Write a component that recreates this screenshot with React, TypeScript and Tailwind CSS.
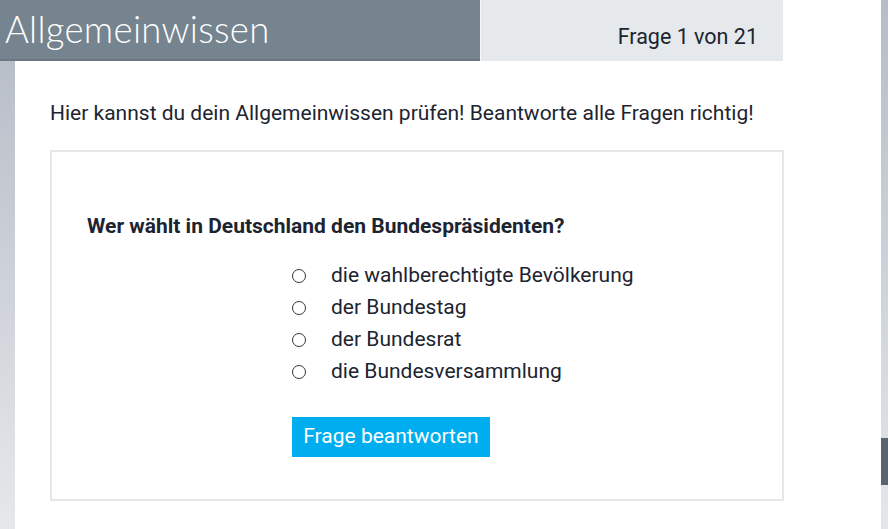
const answers = [
  "die wahlberechtigte Bevölkerung",
  "der Bundestag",
  "der Bundesrat",
  "die Bundesversammlung",
];

export default function App() {
  return (
    <div className="flex h-[529px] w-[888px] overflow-hidden bg-white font-['Roboto',sans-serif] text-[#1c2430]">
      <div className="flex w-[881px] flex-col">
        {/* Kopfzeile */}
        <div className="flex h-[61px] shrink-0">
          <div className="flex w-[480px] items-center border-b-2 border-[#6b7883] bg-[#76848f] pl-[5px]">
            <h1 className="font-['Lato',sans-serif] text-[36.5px] font-light leading-none tracking-[0.3px] text-white">
              Allgemeinwissen
            </h1>
          </div>
          <div className="w-px bg-[#f4f6f7]" />
          <div className="flex w-[302px] items-center justify-end bg-[#e6e9ec] pr-[25px] pt-[12px]">
            <span className="text-[21.5px] leading-none">Frage 1 von 21</span>
          </div>
        </div>

        <div className="flex flex-1">
          <div className="w-[15px] bg-gradient-to-b from-[#b9bfc9] to-[#e6e8eb]" />
          <main className="flex-1 pl-[35px] pt-[40px]">
            <p className="text-[21px] leading-[24px]">
              Hier kannst du dein Allgemeinwissen prüfen! Beantworte alle Fragen richtig!
            </p>
            <div className="mt-[25px] h-[351px] w-[734px] border-2 border-[#e5e8ea] pl-[35px] pt-[62px]">
              <h2 className="text-[21px] font-bold leading-[24px]">
                Wer wählt in Deutschland den Bundespräsidenten?
              </h2>
              <div className="ml-[205px] mt-[22px] flex flex-col">
                {answers.map((a) => (
                  <label key={a} className="flex h-[32px] items-center gap-[25px] text-[21px]">
                    <span className="h-[14px] w-[14px] rounded-full border border-[#333]" />
                    <span>{a}</span>
                  </label>
                ))}
              </div>
              <button
                type="button"
                className="ml-[205px] mt-[29px] h-[40px] w-[198px] bg-[#00aeef] text-[21px] text-white"
              >
                Frage beantworten
              </button>
            </div>
          </main>
        </div>
      </div>
      <div className="flex w-[7px] flex-col bg-gradient-to-b from-[#b6bdc8] to-[#e4e7ea]">
        <div className="h-[438px]" />
        <div className="h-[47px] bg-[#586571]" />
      </div>
    </div>
  );
}
